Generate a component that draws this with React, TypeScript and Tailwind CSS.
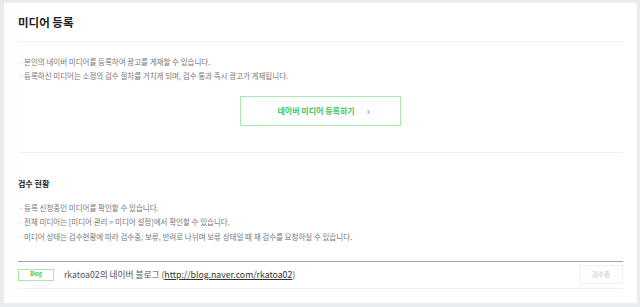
const font = { fontFamily: '"Noto Sans CJK KR", "Noto Sans", sans-serif' };

const introNotes = [
  "본인의 네이버 미디어를 등록하여 광고를 게재할 수 있습니다.",
  "등록하신 미디어는 소정의 검수 절차를 거치게 되며, 검수 통과 즉시 광고가 게재됩니다.",
];

const reviewNotes = [
  "등록 신청중인 미디어를 확인할 수 있습니다.",
  "전체 미디어는 [미디어 관리 > 미디어 설정]에서 확인할 수 있습니다.",
  "미디어 상태는 검수현황에 따라 검수중, 보류, 반려로 나뉘며 보류 상태일 때 재 검수를 요청하실 수 있습니다.",
];

const NoteList = ({ items }: { items: string[] }) => (
  <ul className="flex flex-col">
    {items.map((t) => (
      <li key={t} className="flex h-[14.5px] items-center text-[7.5px] text-[#777]">
        <span className="w-[6px] pl-[1px] text-[#999]">·</span>
        <span>{t}</span>
      </li>
    ))}
  </ul>
);

export default function App() {
  return (
    <div
      className="h-[307px] w-[640px] bg-[#e9ecef] pb-[4px] pl-[4px] pr-[3px] pt-[3px]"
      style={font}
    >
      <div className="flex h-full flex-col bg-white px-[14px]">
        {/* 미디어 등록 */}
        <div className="flex h-[39px] items-center border-b border-[#eef1f2] pt-[2px]">
          <h1 className="text-[11.5px] font-bold text-[#222]">미디어 등록</h1>
        </div>

        <div className="border-b border-[#eef1f2] pb-[26px] pt-[12px]">
          <NoteList items={introNotes} />
          <div className="mt-[13px] flex justify-center">
            <button className="flex h-[30px] w-[161px] items-center justify-center gap-[12px] border border-[#a9e6b2] pl-[6px] text-[8px] font-semibold text-[#3cc458]">
              <span>네이버 미디어 등록하기</span>
              <span className="text-[9px] font-bold leading-none">›</span>
            </button>
          </div>
        </div>

        {/* 검수 현황 */}
        <div className="pt-[25px]">
          <h2 className="text-[8px] font-bold text-[#222]">검수 현황</h2>
          <div className="mt-[10px]">
            <NoteList items={reviewNotes} />
          </div>
        </div>

        <div className="mt-[17px] border-t border-[#a5a5a5]">
          <div className="flex h-[27px] items-center border-b border-[#f0f1f2]">
            <span className="flex h-[12px] w-[36px] items-center justify-center border border-[#a9e6b2] text-[5.5px] font-bold text-[#3cc458]">
              Blog
            </span>
            <span className="ml-[10px] text-[8.7px] text-[#555]">
              rkatoa02의 네이버 블로그 (
              <span className="text-[#333] underline">http://blog.naver.com/rkatoa02</span>)
            </span>
            <button className="ml-auto flex h-[19px] w-[44px] items-center justify-center border border-[#f0f0f0] text-[6.5px] text-[#c8c8c8]">
              검수중
            </button>
          </div>
        </div>
      </div>
    </div>
  );
}
